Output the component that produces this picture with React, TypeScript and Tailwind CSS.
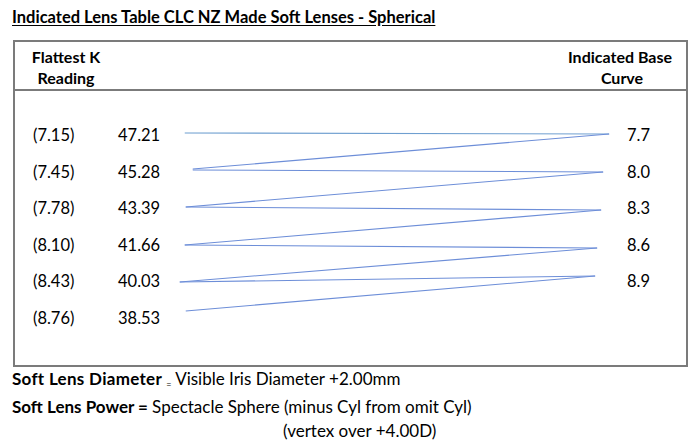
const rows = [
  { r: "(7.15)", k: "47.21", bc: "7.7" },
  { r: "(7.45)", k: "45.28", bc: "8.0" },
  { r: "(7.78)", k: "43.39", bc: "8.3" },
  { r: "(8.10)", k: "41.66", bc: "8.6" },
  { r: "(8.43)", k: "40.03", bc: "8.9" },
  { r: "(8.76)", k: "38.53", bc: "" },
];

// line points in page coordinates, shifted by body origin below
const ox = 14;
const oy = 91;
const segs: [number, number, number, number][] = [
  [184, 133, 609, 134],
  [609, 134, 192, 169],
  [192, 170, 603, 172],
  [603, 172, 185, 207],
  [185, 207, 601, 210],
  [601, 210, 184, 245],
  [184, 245, 597, 248],
  [597, 248, 179, 282],
  [179, 282, 595, 276],
  [595, 276, 185, 311],
];

function Links() {
  return (
    <svg className="absolute left-0 top-0 h-full w-full" viewBox="0 0 672 274" preserveAspectRatio="none">
      {segs.map(([x1, y1, x2, y2], i) => (
        <line
          key={i}
          x1={x1 - ox}
          y1={y1 - oy}
          x2={x2 - ox}
          y2={y2 - oy}
          stroke={i === 0 ? "#6f9fd0" : "#6d8ed8"}
          strokeWidth="1.1"
        />
      ))}
    </svg>
  );
}

export default function App() {
  return (
    <div className="h-[445px] w-[700px] bg-white text-black" style={{ fontFamily: "Lato, 'Open Sans', sans-serif" }}>
      <div className="pl-[12px] pt-[7px]">
        <h1 className="text-[16.5px] font-bold leading-[20px] underline underline-offset-2">
          Indicated Lens Table CLC NZ Made Soft Lenses - Spherical
        </h1>
      </div>

      <div className="ml-[13px] mt-[13px] w-[675px] border-2 border-[#7b7b7b]">
        <div className="flex h-[49px] justify-between border-b-2 border-[#7b7b7b] pt-[4px] text-[16px] font-bold leading-[21px]">
          <div className="w-[102px] text-center">
            <div>Flattest K</div>
            <div>Reading</div>
          </div>
          <div className="w-[134px] pr-[14px] text-center">
            <div className="text-right">Indicated Base</div>
            <div className="pl-[20px]">Curve</div>
          </div>
        </div>

        <div className="relative h-[274px]">
          <Links />
          <div className="flex flex-col gap-[14.6px] pt-[33px] text-[16.5px] leading-[22px]">
            {rows.map((row) => (
              <div key={row.r} className="flex items-center">
                <span className="w-[103px] pl-[18px]">{row.r}</span>
                <span className="w-[60px]">{row.k}</span>
                <span className="ml-auto w-[59px]">{row.bc}</span>
              </div>
            ))}
          </div>
        </div>
      </div>

      <div className="pl-[12px] text-[17px] leading-[24.5px]">
        <div>
          <span className="font-bold tracking-[0.3px]">Soft Lens Diameter </span>
          <span className="relative top-[3px] text-[9px]">=</span>
          <span> Visible Iris Diameter +2.00mm</span>
        </div>
        <div>
          <span className="font-bold">Soft Lens Power = </span>
          <span>Spectacle Sphere (minus Cyl from omit Cyl)</span>
        </div>
        <div className="pl-[271px]">(vertex over +4.00D)</div>
      </div>
    </div>
  );
}
